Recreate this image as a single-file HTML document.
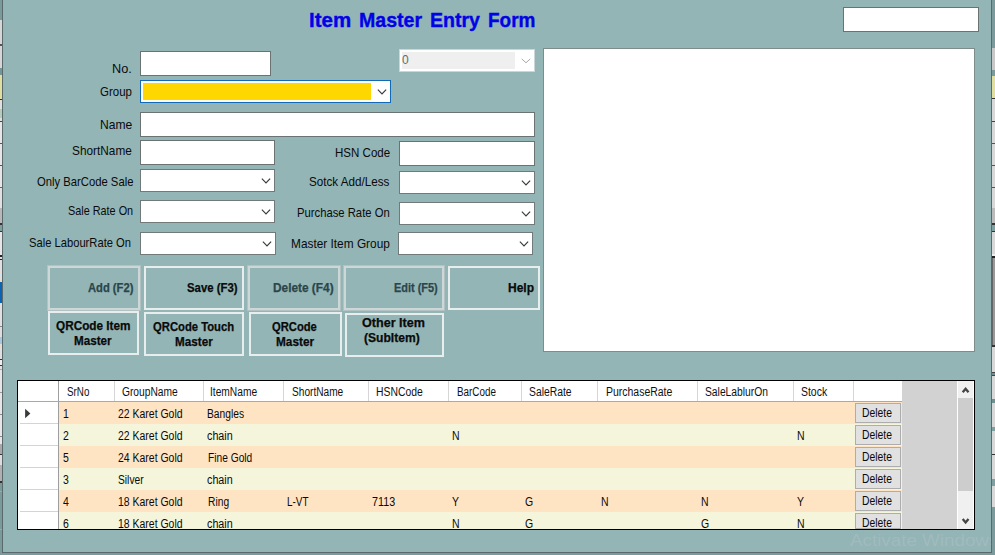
<!DOCTYPE html>
<html><head><meta charset="utf-8"><title>Item Master Entry Form</title>
<style>
html,body{margin:0;padding:0;}
body{width:995px;height:555px;position:relative;overflow:hidden;background:#93b5b6;font-family:"Liberation Sans",sans-serif;}
.b{position:absolute;display:block;}
.t{position:absolute;white-space:pre;line-height:1em;transform-origin:0 0;font-family:"Liberation Sans",sans-serif;}
.ttl{-webkit-text-stroke:0.35px #0202e6;}
.bt{-webkit-text-stroke-width:0.25px;}
</style></head><body>
<div class='b' style='left:0;top:0;width:3px;height:555px;background:linear-gradient(to bottom,#7a9a9b 0px,#7a9a9b 20px,#d6d6d6 20px,#d6d6d6 44px,#555 44px,#555 46px,#d6d6d6 46px,#d6d6d6 68px,#759596 68px,#759596 75px,#e0dea0 75px,#e0dea0 99px,#333 99px,#333 100px,#e0e0e0 100px,#e0e0e0 109px,#b4cdbd 109px,#b4cdbd 118px,#e0e0e0 118px,#e0e0e0 121px,#444 121px,#444 122px,#e6e6e6 122px,#e6e6e6 143px,#555 143px,#555 144px,#e6e6e6 144px,#e6e6e6 165px,#555 165px,#555 166px,#e6e6e6 166px,#e6e6e6 187px,#666 187px,#666 188px,#e0e0e0 188px,#e0e0e0 208px,#b8b8b8 208px,#b8b8b8 223px,#333 223px,#333 225px,#7fa0a0 225px,#7fa0a0 231px,#333 231px,#333 232px,#e6e6e6 232px,#e6e6e6 255px,#222 255px,#222 257px,#ddd 257px,#ddd 259px,#222 259px,#222 260px,#e0e0e0 260px,#e0e0e0 280px,#e8dcc8 280px,#e8dcc8 282px,#0a63b3 282px,#0a63b3 303px,#e0e0e0 303px,#e0e0e0 326px,#888 326px,#888 327px,#ddd 327px,#ddd 337px,#a8c8e0 337px,#a8c8e0 344px,#e0e0e0 344px,#e0e0e0 346px,#e8dcc8 346px,#e8dcc8 347px,#e0e0e0 347px,#e0e0e0 359px,#333 359px,#333 360px,#eee 360px,#eee 365px,#333 365px,#333 366px,#e0e0e0 366px,#e0e0e0 369px,#aaa 369px,#aaa 370px,#e6e6e6 370px,#e6e6e6 392px,#999 392px,#999 393px,#e6e6e6 393px,#e6e6e6 414px,#888 414px,#888 415px,#e6e6e6 415px,#e6e6e6 436px,#888 436px,#888 437px,#e6e6e6 437px,#e6e6e6 444px,#a8a8a8 444px,#a8a8a8 454px,#333 454px,#333 455px,#ddd 455px,#ddd 465px,#b0b0b0 465px,#b0b0b0 481px,#333 481px,#333 483px,#7b9a9b 483px,#7b9a9b 491px,#93b0b0 491px,#93b0b0 492px,#7b9a9b 492px,#7b9a9b 529px,#93b0b0 529px,#93b0b0 530px,#7b9a9b 530px,#7b9a9b 555px)'></div><div class='b' style='left:991px;top:0;width:4px;height:555px;background:linear-gradient(to bottom,#7a9a9b 0px,#7a9a9b 48px,#c8c8c8 48px,#c8c8c8 70px,#7a9a9b 70px,#7a9a9b 76px,#e0dea0 76px,#e0dea0 98px,#333 98px,#333 99px,#d8d8d8 99px,#d8d8d8 121px,#444 121px,#444 122px,#d8d8d8 122px,#d8d8d8 143px,#555 143px,#555 144px,#d8d8d8 144px,#d8d8d8 165px,#555 165px,#555 166px,#d8d8d8 166px,#d8d8d8 187px,#555 187px,#555 188px,#d8d8d8 188px,#d8d8d8 208px,#bbb 208px,#bbb 223px,#333 223px,#333 225px,#7fa0a0 225px,#7fa0a0 231px,#333 231px,#333 232px,#d8d8d8 232px,#d8d8d8 254px,#eee 254px,#eee 256px,#222 256px,#222 258px,#999 258px,#999 345px,#333 345px,#333 347px,#d8d8d8 347px,#d8d8d8 372px,#444 372px,#444 373px,#6f9090 373px,#6f9090 375px,#444 375px,#444 376px,#d8d8d8 376px,#d8d8d8 399px,#6f9090 399px,#6f9090 403px,#d8d8d8 403px,#d8d8d8 427px,#7fa0a0 427px,#7fa0a0 431px,#d8d8d8 431px,#d8d8d8 454px,#333 454px,#333 455px,#d8d8d8 455px,#d8d8d8 479px,#7fa0a0 479px,#7fa0a0 486px,#d8d8d8 486px,#d8d8d8 507px,#7b9a9b 507px,#7b9a9b 555px)'></div><div class='b' style='left:992px;top:258px;width:1px;height:87px;background:#666'></div><div class='b' style='left:0;top:552px;width:995px;height:3px;background:#7b9a9b'></div><div class='b' style='left:2px;top:0;width:990px;height:553px;background:#5a6a6a'></div>
<div class='b' style='left:3px;top:0px;width:988px;height:552px;background:#93b5b6;'></div>
<div class='b' style='left:848px;top:527px;width:143px;height:25px;overflow:hidden'><span style='position:absolute;left:2px;top:5.5px;white-space:pre;font-family:"Liberation Sans",sans-serif;font-size:15.8px;line-height:1em;color:rgba(224,208,220,0.20);transform-origin:0 0;transform:scaleX(1.19)'>Activate Windows</span></div>
<div class='b' style='left:843px;top:7px;width:136px;height:25px;background:#fff;border:1px solid #6b7272;box-sizing:border-box;'></div>
<div class='b' style='left:140px;top:51px;width:131px;height:25px;background:#fff;border:1px solid #6b7272;box-sizing:border-box;'></div>
<div class='b' style='left:140px;top:112px;width:395px;height:25px;background:#fff;border:1px solid #6b7272;box-sizing:border-box;'></div>
<div class='b' style='left:140px;top:140px;width:135px;height:25px;background:#fff;border:1px solid #6b7272;box-sizing:border-box;'></div>
<div class='b' style='left:399px;top:141px;width:136px;height:25px;background:#fff;border:1px solid #6b7272;box-sizing:border-box;'></div>
<div class='b' style='left:543px;top:48px;width:432px;height:304px;background:#fff;border:1px solid #7e8c8c;box-sizing:border-box;'></div>
<div class='b' style='left:140px;top:169px;width:135px;height:23px;background:#fff;border:1px solid #717a7a;box-sizing:border-box;'></div>
<svg class='b' style='left:258.0px;top:172.5px' width='16' height='16' viewBox='0 0 16 16'><path d='M4.30 6.10 L8 9.90 L11.70 6.10' fill='none' stroke='#3a3a3a' stroke-width='1.2' stroke-linecap='square'/></svg>
<div class='b' style='left:140px;top:200px;width:135px;height:23px;background:#fff;border:1px solid #717a7a;box-sizing:border-box;'></div>
<svg class='b' style='left:258.0px;top:203.5px' width='16' height='16' viewBox='0 0 16 16'><path d='M4.30 6.10 L8 9.90 L11.70 6.10' fill='none' stroke='#3a3a3a' stroke-width='1.2' stroke-linecap='square'/></svg>
<div class='b' style='left:140px;top:232px;width:136px;height:23px;background:#fff;border:1px solid #717a7a;box-sizing:border-box;'></div>
<svg class='b' style='left:259.0px;top:235.5px' width='16' height='16' viewBox='0 0 16 16'><path d='M4.30 6.10 L8 9.90 L11.70 6.10' fill='none' stroke='#3a3a3a' stroke-width='1.2' stroke-linecap='square'/></svg>
<div class='b' style='left:399px;top:171px;width:136px;height:23px;background:#fff;border:1px solid #717a7a;box-sizing:border-box;'></div>
<svg class='b' style='left:518.0px;top:174.5px' width='16' height='16' viewBox='0 0 16 16'><path d='M4.30 6.10 L8 9.90 L11.70 6.10' fill='none' stroke='#3a3a3a' stroke-width='1.2' stroke-linecap='square'/></svg>
<div class='b' style='left:399px;top:202px;width:136px;height:23px;background:#fff;border:1px solid #717a7a;box-sizing:border-box;'></div>
<svg class='b' style='left:518.0px;top:205.5px' width='16' height='16' viewBox='0 0 16 16'><path d='M4.30 6.10 L8 9.90 L11.70 6.10' fill='none' stroke='#3a3a3a' stroke-width='1.2' stroke-linecap='square'/></svg>
<div class='b' style='left:398px;top:232px;width:135px;height:23px;background:#fff;border:1px solid #717a7a;box-sizing:border-box;'></div>
<svg class='b' style='left:516.0px;top:235.5px' width='16' height='16' viewBox='0 0 16 16'><path d='M4.30 6.10 L8 9.90 L11.70 6.10' fill='none' stroke='#3a3a3a' stroke-width='1.2' stroke-linecap='square'/></svg>
<div class='b' style='left:140px;top:80px;width:251px;height:23px;background:#fff;border:1px solid #1269b5;box-sizing:border-box;'></div>
<div class='b' style='left:143px;top:83px;width:228px;height:17px;background:#ffd700;'></div>
<svg class='b' style='left:374px;top:83.6px' width='16' height='16' viewBox='0 0 16 16'><path d='M4.30 6.10 L8 9.90 L11.70 6.10' fill='none' stroke='#3a3a3a' stroke-width='1.2' stroke-linecap='square'/></svg>
<div class='b' style='left:399px;top:49px;width:136px;height:23px;background:#fff;border:1px solid #cbd6d6;box-sizing:border-box;'></div>
<div class='b' style='left:402px;top:52px;width:113px;height:17px;background:#efefef;'></div>
<svg class='b' style='left:518px;top:53.2px' width='16' height='16' viewBox='0 0 16 16'><path d='M4.10 6.20 L8 9.80 L11.90 6.20' fill='none' stroke='#a9a9a9' stroke-width='1.0' stroke-linecap='square'/></svg>
<div class='b' style='left:48px;top:266px;width:92px;height:44px;border:2px solid #cdd7d7;box-sizing:border-box;box-shadow:0 0 0 1px #b2c2c2;'></div>
<div class='b' style='left:144px;top:266px;width:100px;height:44px;border:2px solid #e8eeee;box-sizing:border-box;'></div>
<div class='b' style='left:248px;top:266px;width:92px;height:44px;border:2px solid #cdd7d7;box-sizing:border-box;box-shadow:0 0 0 1px #b2c2c2;'></div>
<div class='b' style='left:344px;top:266px;width:100px;height:44px;border:2px solid #cdd7d7;box-sizing:border-box;box-shadow:0 0 0 1px #b2c2c2;'></div>
<div class='b' style='left:448px;top:266px;width:92px;height:44px;border:2px solid #e8eeee;box-sizing:border-box;'></div>
<div class='b' style='left:48px;top:311px;width:91px;height:44px;border:2px solid #e8eeee;box-sizing:border-box;'></div>
<div class='b' style='left:144px;top:312px;width:100px;height:44px;border:2px solid #e8eeee;box-sizing:border-box;'></div>
<div class='b' style='left:249px;top:312px;width:93px;height:44px;border:2px solid #e8eeee;box-sizing:border-box;'></div>
<div class='b' style='left:345px;top:313px;width:99px;height:44px;border:2px solid #e8eeee;box-sizing:border-box;'></div>
<div class='b' style='left:17px;top:380px;width:958px;height:150px;background:#fff;border:1px solid #000;box-sizing:border-box;overflow:hidden;'></div>
<div class='b' style='left:18px;top:401px;width:884px;height:1px;background:#a9a9a9;'></div>
<div class='b' style='left:58px;top:381px;width:1px;height:20px;background:#9e9e9e;'></div>
<div class='b' style='left:114px;top:381px;width:1px;height:20px;background:#d6d6d6;'></div>
<div class='b' style='left:203px;top:381px;width:1px;height:20px;background:#d6d6d6;'></div>
<div class='b' style='left:283px;top:381px;width:1px;height:20px;background:#d6d6d6;'></div>
<div class='b' style='left:368px;top:381px;width:1px;height:20px;background:#d6d6d6;'></div>
<div class='b' style='left:448px;top:381px;width:1px;height:20px;background:#d6d6d6;'></div>
<div class='b' style='left:521px;top:381px;width:1px;height:20px;background:#d6d6d6;'></div>
<div class='b' style='left:597px;top:381px;width:1px;height:20px;background:#d6d6d6;'></div>
<div class='b' style='left:697px;top:381px;width:1px;height:20px;background:#d6d6d6;'></div>
<div class='b' style='left:793px;top:381px;width:1px;height:20px;background:#d6d6d6;'></div>
<div class='b' style='left:853px;top:381px;width:1px;height:20px;background:#d6d6d6;'></div>
<div class='b' style='left:59px;top:402px;width:843px;height:22px;background:#ffe4c4;'></div>
<div class='b' style='left:20px;top:423px;width:38px;height:1px;background:#d4d4d4;'></div>
<div class='b' style='left:855px;top:403px;width:46px;height:20px;background:#e1e1e1;border:1px solid #adadad;box-sizing:border-box;'></div>
<div class='b' style='left:59px;top:424px;width:843px;height:22px;background:#f5f5dc;'></div>
<div class='b' style='left:20px;top:445px;width:38px;height:1px;background:#d4d4d4;'></div>
<div class='b' style='left:855px;top:425px;width:46px;height:20px;background:#e1e1e1;border:1px solid #adadad;box-sizing:border-box;'></div>
<div class='b' style='left:59px;top:446px;width:843px;height:22px;background:#ffe4c4;'></div>
<div class='b' style='left:20px;top:467px;width:38px;height:1px;background:#d4d4d4;'></div>
<div class='b' style='left:855px;top:447px;width:46px;height:20px;background:#e1e1e1;border:1px solid #adadad;box-sizing:border-box;'></div>
<div class='b' style='left:59px;top:468px;width:843px;height:22px;background:#f5f5dc;'></div>
<div class='b' style='left:20px;top:489px;width:38px;height:1px;background:#d4d4d4;'></div>
<div class='b' style='left:855px;top:469px;width:46px;height:20px;background:#e1e1e1;border:1px solid #adadad;box-sizing:border-box;'></div>
<div class='b' style='left:59px;top:490px;width:843px;height:22px;background:#ffe4c4;'></div>
<div class='b' style='left:20px;top:511px;width:38px;height:1px;background:#d4d4d4;'></div>
<div class='b' style='left:855px;top:491px;width:46px;height:20px;background:#e1e1e1;border:1px solid #adadad;box-sizing:border-box;'></div>
<div class='b' style='left:59px;top:512px;width:843px;height:17px;background:#f5f5dc;'></div>
<div class='b' style='left:855px;top:513px;width:46px;height:16px;background:#e1e1e1;border:1px solid #adadad;box-sizing:border-box;'></div>
<div class='b' style='left:58px;top:402px;width:1px;height:127px;background:#9e9e9e;'></div>
<div class='b' style='left:902px;top:381px;width:55px;height:148px;background:#d2d2d2;'></div>
<div class='b' style='left:957px;top:381px;width:17px;height:148px;background:#f0f0f0;'></div>
<div class='b' style='left:958px;top:398px;width:15px;height:93px;background:#cdcdcd;'></div>
<div class='b' style='left:957px;top:381px;width:1px;height:148px;background:#fff;'></div>
<div class='b' style='left:973px;top:381px;width:1px;height:148px;background:#fff;'></div>
<svg class='b' style='left:957px;top:381px' width='17' height='17' viewBox='0 0 17 17'><path d='M5.7 11.2 L8.6 7.7 L11.5 11.2' fill='none' stroke='#454545' stroke-width='2.3'/></svg>
<svg class='b' style='left:957px;top:512px' width='17' height='17' viewBox='0 0 17 17'><path d='M5.7 6.9 L8.6 10.4 L11.5 6.9' fill='none' stroke='#454545' stroke-width='2.3'/></svg>
<svg class='b' style='left:24px;top:407px' width='10' height='14' viewBox='0 0 10 14'><path d='M1.1 1.7 L6.4 6.5 L1.1 11.3 Z' fill='#3a3a3a'/></svg>
<span class='t ttl' style='left:308.76px;top:11.00px;font-size:19.8px;font-weight:700;color:#0202e6;transform:scaleX(1.0362)'>Item</span>
<span class='t ttl' style='left:359.41px;top:11.00px;font-size:19.8px;font-weight:700;color:#0202e6;transform:scaleX(0.9894)'>Master</span>
<span class='t ttl' style='left:430.31px;top:11.00px;font-size:19.8px;font-weight:700;color:#0202e6;transform:scaleX(0.9887)'>Entry</span>
<span class='t ttl' style='left:487.64px;top:11.00px;font-size:19.8px;font-weight:700;color:#0202e6;transform:scaleX(0.9590)'>Form</span>
<span class='t ' style='left:112.49px;top:63.00px;font-size:12.6px;font-weight:400;color:#0a0a0a;transform:scaleX(1.0111)'>No.</span>
<span class='t ' style='left:99.70px;top:86.00px;font-size:12.6px;font-weight:400;color:#0a0a0a;transform:scaleX(0.9115)'>Group</span>
<span class='t ' style='left:99.64px;top:119.00px;font-size:12.6px;font-weight:400;color:#0a0a0a;transform:scaleX(0.9604)'>Name</span>
<span class='t ' style='left:72.10px;top:145.00px;font-size:12.6px;font-weight:400;color:#0a0a0a;transform:scaleX(0.9389)'>ShortName</span>
<span class='t ' style='left:36.60px;top:176.00px;font-size:12.6px;font-weight:400;color:#0a0a0a;transform:scaleX(0.8943)'>Only BarCode Sale</span>
<span class='t ' style='left:67.50px;top:205.00px;font-size:12.6px;font-weight:400;color:#0a0a0a;transform:scaleX(0.8611)'>Sale Rate On</span>
<span class='t ' style='left:28.50px;top:237.00px;font-size:12.6px;font-weight:400;color:#0a0a0a;transform:scaleX(0.8884)'>Sale LabourRate On</span>
<span class='t ' style='left:334.88px;top:147.00px;font-size:12.6px;font-weight:400;color:#0a0a0a;transform:scaleX(0.9157)'>HSN Code</span>
<span class='t ' style='left:309.30px;top:176.00px;font-size:12.6px;font-weight:400;color:#0a0a0a;transform:scaleX(0.9254)'>Sotck Add/Less</span>
<span class='t ' style='left:296.71px;top:207.00px;font-size:12.6px;font-weight:400;color:#0a0a0a;transform:scaleX(0.8947)'>Purchase Rate On</span>
<span class='t ' style='left:291.46px;top:238.00px;font-size:12.6px;font-weight:400;color:#0a0a0a;transform:scaleX(0.9416)'>Master Item Group</span>
<span class='t ' style='left:402.30px;top:54.00px;font-size:12.6px;font-weight:400;color:#6a6a6a;transform:scaleX(0.9571)'>0</span>
<span class='t bt' style='left:88.20px;top:282.00px;font-size:12.0px;font-weight:700;color:#2b464b;transform:scaleX(0.9330)'>Add (F2)</span>
<span class='t bt' style='left:186.90px;top:282.00px;font-size:12.0px;font-weight:700;color:#0a0a0a;transform:scaleX(0.9464)'>Save (F3)</span>
<span class='t bt' style='left:272.70px;top:282.00px;font-size:12.0px;font-weight:700;color:#2b464b;transform:scaleX(0.9877)'>Delete (F4)</span>
<span class='t bt' style='left:393.60px;top:282.00px;font-size:12.0px;font-weight:700;color:#2b464b;transform:scaleX(0.9105)'>Edit (F5)</span>
<span class='t bt' style='left:508.30px;top:282.00px;font-size:12.0px;font-weight:700;color:#0a0a0a;transform:scaleX(1.0010)'>Help</span>
<span class='t bt' style='left:55.60px;top:320.00px;font-size:12.0px;font-weight:700;color:#0a0a0a;transform:scaleX(0.9809)'>QRCode Item</span>
<span class='t bt' style='left:74.00px;top:335.00px;font-size:12.0px;font-weight:700;color:#0a0a0a;transform:scaleX(0.9715)'>Master</span>
<span class='t bt' style='left:153.20px;top:321.00px;font-size:12.0px;font-weight:700;color:#0a0a0a;transform:scaleX(0.9384)'>QRCode Touch</span>
<span class='t bt' style='left:174.60px;top:336.00px;font-size:12.0px;font-weight:700;color:#0a0a0a;transform:scaleX(0.9740)'>Master</span>
<span class='t bt' style='left:272.00px;top:321.00px;font-size:12.0px;font-weight:700;color:#0a0a0a;transform:scaleX(0.9332)'>QRCode</span>
<span class='t bt' style='left:275.60px;top:336.00px;font-size:12.0px;font-weight:700;color:#0a0a0a;transform:scaleX(0.9843)'>Master</span>
<span class='t bt' style='left:362.20px;top:317.00px;font-size:12.0px;font-weight:700;color:#0a0a0a;transform:scaleX(1.0482)'>Other Item</span>
<span class='t bt' style='left:364.30px;top:332.00px;font-size:12.0px;font-weight:700;color:#0a0a0a;transform:scaleX(1.0066)'>(SubItem)</span>
<span class='t ' style='left:66.50px;top:386.00px;font-size:12.0px;font-weight:400;color:#111;transform:scaleX(0.8169)'>SrNo</span>
<span class='t ' style='left:121.80px;top:386.00px;font-size:12.0px;font-weight:400;color:#111;transform:scaleX(0.8525)'>GroupName</span>
<span class='t ' style='left:210.15px;top:386.00px;font-size:12.0px;font-weight:400;color:#111;transform:scaleX(0.8505)'>ItemName</span>
<span class='t ' style='left:291.50px;top:386.00px;font-size:12.0px;font-weight:400;color:#111;transform:scaleX(0.8440)'>ShortName</span>
<span class='t ' style='left:376.40px;top:386.00px;font-size:12.0px;font-weight:400;color:#111;transform:scaleX(0.8648)'>HSNCode</span>
<span class='t ' style='left:456.50px;top:386.00px;font-size:12.0px;font-weight:400;color:#111;transform:scaleX(0.8220)'>BarCode</span>
<span class='t ' style='left:529.40px;top:386.00px;font-size:12.0px;font-weight:400;color:#111;transform:scaleX(0.8613)'>SaleRate</span>
<span class='t ' style='left:605.60px;top:386.00px;font-size:12.0px;font-weight:400;color:#111;transform:scaleX(0.8721)'>PurchaseRate</span>
<span class='t ' style='left:705.30px;top:386.00px;font-size:12.0px;font-weight:400;color:#111;transform:scaleX(0.8582)'>SaleLablurOn</span>
<span class='t ' style='left:801.00px;top:386.00px;font-size:12.0px;font-weight:400;color:#111;transform:scaleX(0.8706)'>Stock</span>
<span class='t g' style='left:63.30px;top:408.00px;font-size:12.0px;font-weight:400;color:#0a0a0a;transform:scaleX(0.8736)'>1</span>
<span class='t g' style='left:118.10px;top:408.00px;font-size:12.0px;font-weight:400;color:#0a0a0a;transform:scaleX(0.8723)'>22 Karet Gold</span>
<span class='t g' style='left:207.20px;top:408.00px;font-size:12.0px;font-weight:400;color:#0a0a0a;transform:scaleX(0.8532)'>Bangles</span>
<span class='t g' style='left:63.30px;top:430.00px;font-size:12.0px;font-weight:400;color:#0a0a0a;transform:scaleX(0.8736)'>2</span>
<span class='t g' style='left:118.10px;top:430.00px;font-size:12.0px;font-weight:400;color:#0a0a0a;transform:scaleX(0.8723)'>22 Karet Gold</span>
<span class='t g' style='left:206.80px;top:430.00px;font-size:12.0px;font-weight:400;color:#0a0a0a;transform:scaleX(0.8960)'>chain</span>
<span class='t g' style='left:452.30px;top:430.00px;font-size:12.0px;font-weight:400;color:#0a0a0a;transform:scaleX(0.8736)'>N</span>
<span class='t g' style='left:797.00px;top:430.00px;font-size:12.0px;font-weight:400;color:#0a0a0a;transform:scaleX(0.8736)'>N</span>
<span class='t g' style='left:63.30px;top:452.00px;font-size:12.0px;font-weight:400;color:#0a0a0a;transform:scaleX(0.8736)'>5</span>
<span class='t g' style='left:118.10px;top:452.00px;font-size:12.0px;font-weight:400;color:#0a0a0a;transform:scaleX(0.8723)'>24 Karet Gold</span>
<span class='t g' style='left:207.60px;top:452.00px;font-size:12.0px;font-weight:400;color:#0a0a0a;transform:scaleX(0.8510)'>Fine Gold</span>
<span class='t g' style='left:63.30px;top:474.00px;font-size:12.0px;font-weight:400;color:#0a0a0a;transform:scaleX(0.8736)'>3</span>
<span class='t g' style='left:118.10px;top:474.00px;font-size:12.0px;font-weight:400;color:#0a0a0a;transform:scaleX(0.8531)'>Silver</span>
<span class='t g' style='left:206.80px;top:474.00px;font-size:12.0px;font-weight:400;color:#0a0a0a;transform:scaleX(0.8960)'>chain</span>
<span class='t g' style='left:63.30px;top:496.00px;font-size:12.0px;font-weight:400;color:#0a0a0a;transform:scaleX(0.8736)'>4</span>
<span class='t g' style='left:118.10px;top:496.00px;font-size:12.0px;font-weight:400;color:#0a0a0a;transform:scaleX(0.8723)'>18 Karet Gold</span>
<span class='t g' style='left:207.60px;top:496.00px;font-size:12.0px;font-weight:400;color:#0a0a0a;transform:scaleX(0.8540)'>Ring</span>
<span class='t g' style='left:287.20px;top:496.00px;font-size:12.0px;font-weight:400;color:#0a0a0a;transform:scaleX(0.8248)'>L-VT</span>
<span class='t g' style='left:372.20px;top:496.00px;font-size:12.0px;font-weight:400;color:#0a0a0a;transform:scaleX(0.8955)'>7113</span>
<span class='t g' style='left:452.30px;top:496.00px;font-size:12.0px;font-weight:400;color:#0a0a0a;transform:scaleX(0.8736)'>Y</span>
<span class='t g' style='left:525.00px;top:496.00px;font-size:12.0px;font-weight:400;color:#0a0a0a;transform:scaleX(0.8736)'>G</span>
<span class='t g' style='left:601.30px;top:496.00px;font-size:12.0px;font-weight:400;color:#0a0a0a;transform:scaleX(0.8736)'>N</span>
<span class='t g' style='left:701.00px;top:496.00px;font-size:12.0px;font-weight:400;color:#0a0a0a;transform:scaleX(0.8736)'>N</span>
<span class='t g' style='left:797.00px;top:496.00px;font-size:12.0px;font-weight:400;color:#0a0a0a;transform:scaleX(0.8736)'>Y</span>
<span class='t g' style='left:63.30px;top:518.00px;font-size:12.0px;font-weight:400;color:#0a0a0a;transform:scaleX(0.8736)'>6</span>
<span class='t g' style='left:118.10px;top:518.00px;font-size:12.0px;font-weight:400;color:#0a0a0a;transform:scaleX(0.8723)'>18 Karet Gold</span>
<span class='t g' style='left:206.80px;top:518.00px;font-size:12.0px;font-weight:400;color:#0a0a0a;transform:scaleX(0.8960)'>chain</span>
<span class='t g' style='left:452.30px;top:518.00px;font-size:12.0px;font-weight:400;color:#0a0a0a;transform:scaleX(0.8736)'>N</span>
<span class='t g' style='left:525.00px;top:518.00px;font-size:12.0px;font-weight:400;color:#0a0a0a;transform:scaleX(0.8736)'>G</span>
<span class='t g' style='left:701.00px;top:518.00px;font-size:12.0px;font-weight:400;color:#0a0a0a;transform:scaleX(0.8736)'>G</span>
<span class='t g' style='left:797.00px;top:518.00px;font-size:12.0px;font-weight:400;color:#0a0a0a;transform:scaleX(0.8736)'>N</span>
<span class='t g' style='left:862.20px;top:407.00px;font-size:12.0px;font-weight:400;color:#0a0a0a;transform:scaleX(0.8625)'>Delete</span>
<span class='t g' style='left:862.20px;top:429.00px;font-size:12.0px;font-weight:400;color:#0a0a0a;transform:scaleX(0.8625)'>Delete</span>
<span class='t g' style='left:862.20px;top:451.00px;font-size:12.0px;font-weight:400;color:#0a0a0a;transform:scaleX(0.8625)'>Delete</span>
<span class='t g' style='left:862.20px;top:473.00px;font-size:12.0px;font-weight:400;color:#0a0a0a;transform:scaleX(0.8625)'>Delete</span>
<span class='t g' style='left:862.20px;top:495.00px;font-size:12.0px;font-weight:400;color:#0a0a0a;transform:scaleX(0.8625)'>Delete</span>
<span class='t g' style='left:862.20px;top:517.00px;font-size:12.0px;font-weight:400;color:#0a0a0a;transform:scaleX(0.8625)'>Delete</span>
</body></html>
